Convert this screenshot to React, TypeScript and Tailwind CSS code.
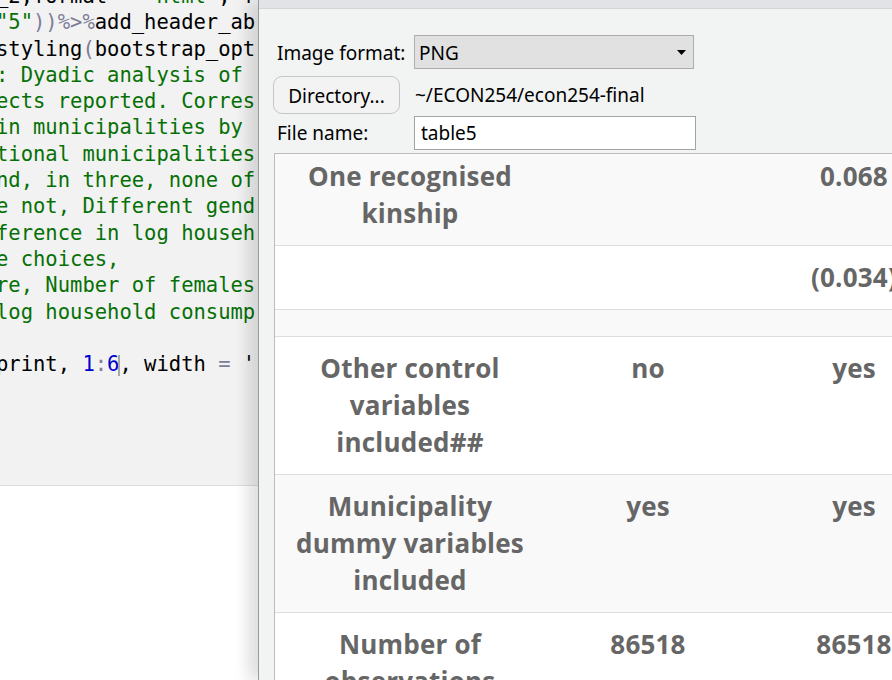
import React from 'react'

type Tok = { t: string; c?: string }

const K = 'text-[#000000]'
const G = 'text-[#067006]'
const P = 'text-[#7d7d98]'
const B = 'text-[#0000d0]'

const codeLines: Tok[][] = [
  [{ t: '_2,format ' }, { t: '=', c: P }, { t: ' ' }, { t: '"html"', c: G }, { t: ', f' }],
  [{ t: '"5"', c: G }, { t: '))', c: P }, { t: '%>%', c: P }, { t: 'add_header_ab' }],
  [{ t: 'styling' }, { t: '(', c: P }, { t: 'bootstrap_opt' }],
  [{ t: ': Dyadic analysis of ', c: G }],
  [{ t: 'ects reported. Corres', c: G }],
  [{ t: 'in municipalities by ', c: G }],
  [{ t: 'tional municipalities', c: G }],
  [{ t: 'nd, in three, none of', c: G }],
  [{ t: 'e not, Different gend', c: G }],
  [{ t: 'ference in log househ', c: G }],
  [{ t: 'e choices,', c: G }],
  [{ t: 're, Number of females', c: G }],
  [{ t: 'log household consump', c: G }],
  [{ t: ' ' }],
  [{ t: 'print, ' }, { t: '1', c: B }, { t: ':', c: P }, { t: '6', c: B }, { t: '|cursor|' }, { t: ', width ' }, { t: '=', c: P }, { t: " '" }],
]

const rows = [
  { label: ['One recognised', 'kinship'], a: '', b: '0.068' },
  { label: [], a: '', b: '(0.034)' },
  { label: [], a: '', b: '' },
  { label: ['Other control', 'variables', 'included##'], a: 'no', b: 'yes' },
  { label: ['Municipality', 'dummy variables', 'included'], a: 'yes', b: 'yes' },
  { label: ['Number of', 'observations'], a: '86518', b: '86518' },
]

function CodeLine({ toks }: { toks: Tok[] }) {
  return (
    <div className="h-[26.3px] leading-[26.3px] whitespace-pre">
      {toks.map((tok, i) =>
        tok.t === '|cursor|' ? (
          <span key={i} className="inline-block w-[2px] h-[21px] align-middle bg-[#a8a8a8] -ml-[1px] -mr-[1px]" />
        ) : (
          <span key={i} className={tok.c ?? K}>
            {tok.t}
          </span>
        ),
      )}
    </div>
  )
}

export default function App() {
  return (
    <div className="w-[892px] h-[680px] flex overflow-hidden bg-white">
      {/* Editor behind the dialog */}
      <div className="w-[258px] shrink-0 flex flex-col overflow-hidden">
        <div className="h-[486px] bg-[#f2f2f2] border-b border-[#dcdcdc] overflow-hidden">
          <div
            className="-mt-[17px] -ml-[4px] text-[20.5px]"
            style={{ fontFamily: '"DejaVu Sans Mono", "Liberation Mono", monospace' }}
          >
            {codeLines.map((l, i) => (
              <CodeLine key={i} toks={l} />
            ))}
          </div>
        </div>
        <div className="flex-1 bg-white" />
      </div>

      {/* Save as image dialog */}
      <div className="relative z-10 flex-1 flex flex-col bg-[#f2f3f3] border-l border-[#9a9a9a] shadow-[-10px_0_14px_rgba(0,0,0,0.13)] overflow-hidden">
        <div className="h-[9px] shrink-0 bg-[#e2e3e7] border-b border-[#d3d4d8]" />

        <div
          className="pl-[14px] pt-[26px] text-[19px] text-[#000000]"
          style={{ fontFamily: '"Noto Sans", "Open Sans", sans-serif' }}
        >
          <div className="flex items-center h-[34px]">
            <span className="w-[141px] pl-[4px] pt-[3px]">Image format:</span>
            <div className="w-[280px] h-[34px] bg-[#e1e1e1] border border-[#adadad] flex items-center justify-between pl-[4px] pr-[7px]">
              <span className="pt-[3px]">PNG</span>
              <svg width="9" height="5" viewBox="0 0 9 5">
                <path d="M0 0 H9 L4.5 5 Z" fill="#000" />
              </svg>
            </div>
          </div>

          <div className="flex items-center h-[38px] mt-[7px]">
            <button className="w-[127px] h-[38px] rounded-[9px] border border-[#c6c6c6] bg-[#f3f3f3] pt-[3px]">
              Directory...
            </button>
            <span className="ml-[15px]">~/ECON254/econ254-final</span>
          </div>

          <div className="flex items-center h-[34px] mt-[2px]">
            <span className="w-[141px] pl-[4px]">File name:</span>
            <div className="w-[282px] h-[34px] bg-white border border-[#a3a3a3] flex items-center pl-[6px]">
              table5
            </div>
          </div>
        </div>

        {/* Table preview */}
        <div className="mt-[3px] ml-[15px] flex-1 bg-white border-t border-l border-[#bdbdbd] overflow-hidden">
          <table
            className="w-[682px] table-fixed -mt-[9px] border-collapse text-[26px] font-bold tracking-[0.2px] text-[#666666]"
            style={{ fontFamily: '"Open Sans", "Noto Sans", sans-serif' }}
          >
            <colgroup>
              <col className="w-[270px]" />
              <col className="w-[206px]" />
              <col className="w-[206px]" />
            </colgroup>
            <tbody>
              {rows.map((r, i) => (
                <tr key={i} className={i % 2 === 0 ? 'bg-[#f9f9f9]' : 'bg-white'}>
                  <td className="py-[13px] px-2 align-top text-center leading-[37px] border-b border-[#dddddd]">
                    {r.label.map((s, j) => (
                      <div key={j} className="whitespace-nowrap">
                        {s}
                      </div>
                    ))}
                  </td>
                  <td className="py-[13px] px-2 align-top text-center leading-[37px] border-b border-[#dddddd]">
                    {r.a}
                  </td>
                  <td className="py-[13px] px-2 align-top text-center leading-[37px] border-b border-[#dddddd] whitespace-nowrap">
                    {r.b}
                  </td>
                </tr>
              ))}
            </tbody>
          </table>
        </div>
      </div>
    </div>
  )
}
